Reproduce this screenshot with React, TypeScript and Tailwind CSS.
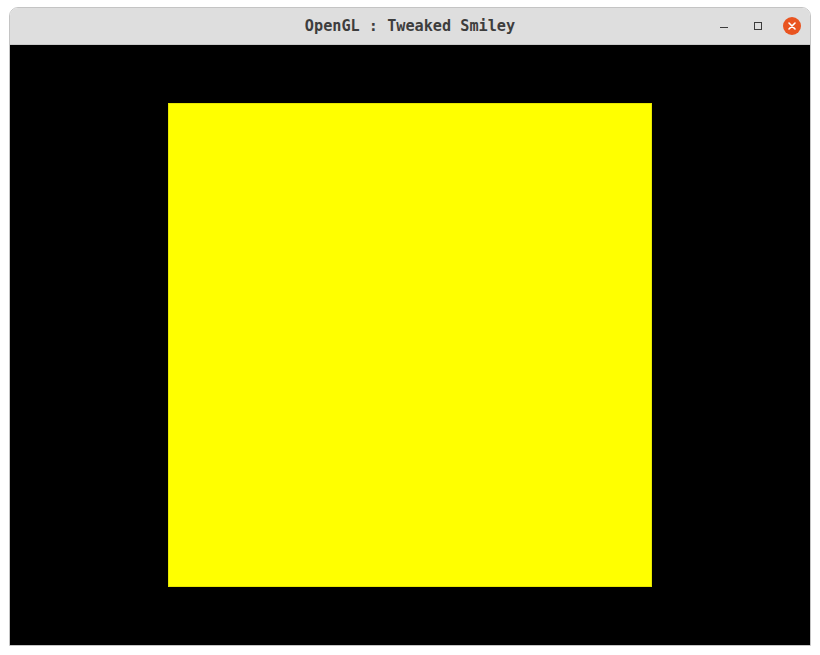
import React from 'react';

// Ubuntu-style window chrome around a GL canvas

const WindowButtons = () => (
  <div className="absolute right-[9px] top-0 flex h-full items-center">
    {/* minimize */}
    <div className="flex h-[18px] w-[8px] items-end pb-[7px]">
      <div className="h-px w-[8px] bg-[#3c3c3c]" />
    </div>
    {/* maximize */}
    <div className="ml-[26px] h-[8px] w-[8px] border-[1.5px] border-[#3c3c3c]" />
    {/* close */}
    <div className="ml-[21px] flex h-[18px] w-[18px] items-center justify-center rounded-full bg-[#e95420]">
      <svg width="8" height="8" viewBox="0 0 8 8">
        <path d="M1 1 L7 7 M7 1 L1 7" stroke="#ffffff" strokeWidth="1.6" strokeLinecap="round" />
      </svg>
    </div>
  </div>
);

export default function App() {
  return (
    <div className="h-[655px] w-[820px] bg-white pl-[9px] pt-[7px]">
      <div className="w-[802px] overflow-hidden rounded-t-[9px] border border-[#c4c4c4]">
        <div className="relative flex h-[37px] items-center justify-center border-b border-[#c9c9c9] bg-[#dedede]">
          <span
            className="pt-[1px] text-[15.2px] font-bold text-[#3d3d3d]"
            style={{ fontFamily: '"DejaVu Sans Mono", "Liberation Mono", monospace' }}
          >
            OpenGL : Tweaked Smiley
          </span>
          <WindowButtons />
        </div>
        <div className="flex h-[600px] w-[800px] items-center justify-center bg-black">
          <div className="h-[484px] w-[484px] border border-[#e6e600] bg-[#ffff00]" />
        </div>
      </div>
    </div>
  );
}
